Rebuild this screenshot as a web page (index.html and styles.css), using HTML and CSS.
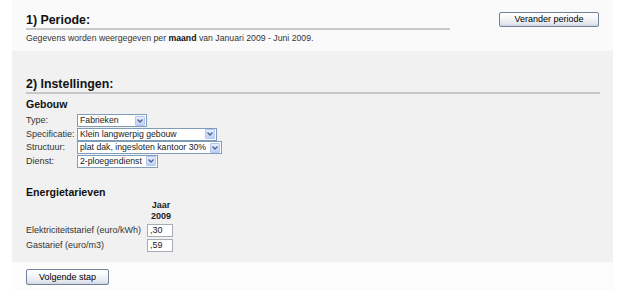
FILE: index.html
```html
<!DOCTYPE html>
<html>
<head>
<meta charset="utf-8">
<link rel="stylesheet" href="styles.css">
</head>
<body>
<div class="page">
  <section class="panel p1">
    <div class="p1-top">
      <h2 class="h h-period">1) Periode:</h2>
      <button class="btn btn-period">Verander periode</button>
    </div>
    <p class="info">Gegevens worden weergegeven per <b>maand</b> van Januari 2009 - Juni 2009.</p>
  </section>

  <section class="panel p2">
    <h2 class="h">2) Instellingen:</h2>
    <h3 class="sub">Gebouw</h3>
    <div class="form">
      <div class="row">
        <span class="lbl">Type:</span>
        <span class="sel w-type"><span class="val">Fabrieken</span><span class="arrow"><svg width="6" height="4" viewBox="0 0 6 4"><path d="M0.5 0.5 L3 3 L5.5 0.5" fill="none" stroke="#4d6185" stroke-width="1.3"/></svg></span></span>
      </div>
      <div class="row">
        <span class="lbl">Specificatie:</span>
        <span class="sel w-spec"><span class="val">Klein langwerpig gebouw</span><span class="arrow"><svg width="6" height="4" viewBox="0 0 6 4"><path d="M0.5 0.5 L3 3 L5.5 0.5" fill="none" stroke="#4d6185" stroke-width="1.3"/></svg></span></span>
      </div>
      <div class="row">
        <span class="lbl">Structuur:</span>
        <span class="sel w-struct"><span class="val">plat dak, ingesloten kantoor 30%</span><span class="arrow"><svg width="6" height="4" viewBox="0 0 6 4"><path d="M0.5 0.5 L3 3 L5.5 0.5" fill="none" stroke="#4d6185" stroke-width="1.3"/></svg></span></span>
      </div>
      <div class="row">
        <span class="lbl">Dienst:</span>
        <span class="sel w-dienst"><span class="val">2-ploegendienst</span><span class="arrow"><svg width="6" height="4" viewBox="0 0 6 4"><path d="M0.5 0.5 L3 3 L5.5 0.5" fill="none" stroke="#4d6185" stroke-width="1.3"/></svg></span></span>
      </div>
    </div>

    <h3 class="sub sub-energy">Energietarieven</h3>
    <div class="tarief">
      <span class="empty"></span>
      <span class="th">Jaar<br>2009</span>
      <span class="lbl2">Elektriciteitstarief (euro/kWh)</span>
      <span class="inp">,30</span>
      <span class="lbl2">Gastarief (euro/m3)</span>
      <span class="inp">,59</span>
    </div>
  </section>

  <section class="panel p3">
    <button class="btn btn-next">Volgende stap</button>
  </section>
</div>
</body>
</html>
```

FILE: styles.css
```css
html, body {
  margin: 0;
  padding: 0;
  background: #ffffff;
}

body {
  font-family: "Liberation Sans", Arial, sans-serif;
  font-size: 9px;
  color: #333333;
}

.page {
  margin-left: 12px;
  width: 601px;
}

.panel {
  box-sizing: border-box;
}

.p1 {
  background: #fafafa;
  padding: 12px 14px 7px 14px;
  height: 51px;
}

.p1-top {
  display: flex;
  justify-content: space-between;
  align-items: flex-start;
}

.h {
  margin: 0;
  font-size: 12.4px;
  font-weight: bold;
  line-height: 15px;
  color: #111111;
  border-bottom: 2px solid #c8c8c8;
}

.h-period {
  width: 424px;
  margin-top: 1px;
}

.btn {
  font-family: "Liberation Sans", Arial, sans-serif;
  font-size: 9px;
  color: #000000;
  height: 16px;
  padding: 0;
  line-height: 14px;
  border: 1px solid #73829b;
  border-radius: 2px;
  background: linear-gradient(#ffffff 0%, #f6f7f9 40%, #e4e8ef 80%, #cfd5e1 100%);
}

.btn-period {
  width: 100px;
  height: 15px;
  line-height: 13px;
}

.info {
  margin: 3px 0 0 0;
  line-height: 11px;
  font-size: 8.7px;
  color: #333333;
}

.info b {
  color: #111111;
}

.p2 {
  background: #f1f1f1;
  padding: 26px 13px 0 14px;
  height: 211px;
}

.sub {
  margin: 4px 0 0 0;
  font-size: 10.5px;
  font-weight: bold;
  line-height: 12px;
  color: #111111;
}

.form {
  margin-top: 4px;
  display: flex;
  flex-direction: column;
  gap: 0.5px;
}

.row {
  display: flex;
  align-items: center;
  height: 13px;
}

.lbl {
  width: 51px;
  flex-shrink: 0;
  line-height: 13px;
  color: #333333;
}

.sel {
  box-sizing: border-box;
  height: 13px;
  border: 1px solid #7f9db9;
  background: #ffffff;
  display: flex;
  align-items: center;
  justify-content: space-between;
}

.val {
  padding-left: 2px;
  font-size: 8.7px;
  line-height: 11px;
  color: #222222;
  white-space: nowrap;
  overflow: hidden;
}

.arrow {
  box-sizing: border-box;
  flex-shrink: 0;
  width: 10px;
  height: 10px;
  margin: 0 1px 0 1px;
  border: 1px solid #b3c6f0;
  border-radius: 1px;
  background: linear-gradient(#e6edff, #bfd0f8);
  display: flex;
  align-items: center;
  justify-content: center;
}

.arrow svg {
  display: block;
}

.w-type { width: 70px; }
.w-spec { width: 140px; }
.w-struct { width: 145px; }
.w-dienst { width: 81px; }

.sub-energy {
  margin-top: 18.5px;
  font-size: 10.6px;
}

.tarief {
  margin-top: 2px;
  display: grid;
  grid-template-columns: 121px 26px;
  grid-template-rows: 22px 13px 13px;
  row-gap: 2px;
}

.th {
  font-weight: bold;
  line-height: 11px;
  text-align: center;
  color: #222222;
  margin-bottom: 1px;
  padding-left: 2px;
}

.lbl2 {
  line-height: 13px;
  color: #333333;
  white-space: nowrap;
}

.inp {
  box-sizing: border-box;
  height: 13px;
  border: 1px solid #a5acb5;
  background: #ffffff;
  padding-left: 2px;
  line-height: 11px;
  color: #222222;
}

.p3 {
  background: #fcfcfc;
  padding: 7px 14px 0 14px;
  height: 28px;
}

.btn-next {
  width: 83px;
  height: 16px;
}
```
